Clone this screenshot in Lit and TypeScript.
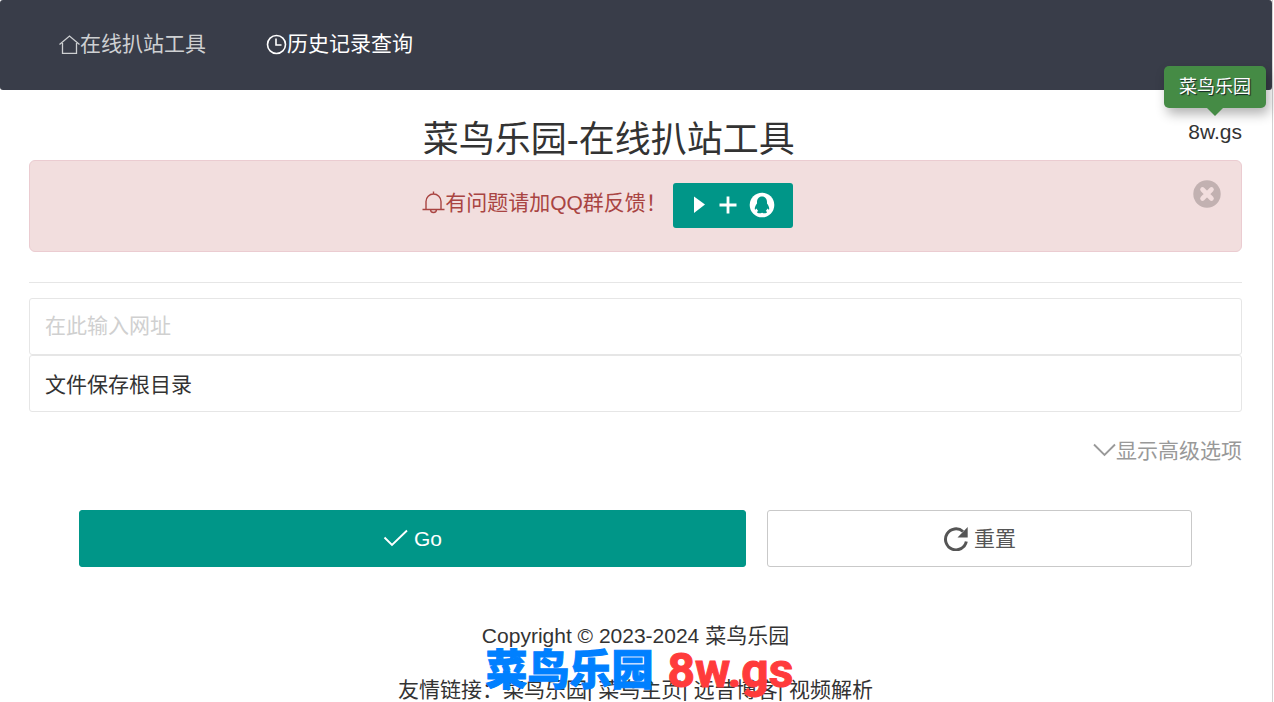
import { LitElement, html, css } from "lit";
import { customElement, state } from "lit/decorators.js";

@customElement("app-root")
export class AppRoot extends LitElement {
  @state() private alertOpen = true;

  static styles = css`
    :host {
      display: block;
      position: relative;
      box-sizing: border-box;
      min-height: 100vh;
      margin-right: 1px;
      border-right: 1px solid #d2d2d2;
      background: #fff;
      color: #333;
      font-family: "Liberation Sans", "Noto Sans CJK SC", sans-serif;
      font-size: 21px;
      line-height: 30px;
    }
    * { box-sizing: border-box; }
    a { color: inherit; text-decoration: none; }
    svg { display: block; flex: none; }
    button, input { font: inherit; margin: 0; }
    button { cursor: pointer; }
    .nav {
      display: flex;
      height: 90px;
      padding: 0 29px;
      background: #393d49;
      border-radius: 3px;
    }
    .nav a {
      display: flex;
      align-items: center;
      padding: 0 30px 2px;
      color: #fff;
    }
    .nav a.dim { color: #ced0d2; }
    .container { padding: 20px 30px 0 29px; }
    .head { display: flex; height: 50px; }
    h1 {
      flex: 1;
      margin: 0;
      font-size: 36px;
      font-weight: 400;
      line-height: 40px;
      padding-top: 10px;
      text-align: center;
    }
    .site { position: relative; padding-top: 7px; }
    .tip {
      position: absolute;
      right: -24px;
      bottom: 52px;
      padding: 6px 15px;
      border-radius: 5px;
      background: #458b45;
      color: #fff;
      font-size: 18px;
      white-space: nowrap;
      text-shadow: 1px 1px 1px #122;
      box-shadow: 3px 6px 12px rgba(0, 0, 0, 0.3);
    }
    .tip::after {
      content: "";
      position: absolute;
      top: 100%;
      left: 50%;
      margin-left: -8px;
      border: 8px solid transparent;
      border-top-color: #458b45;
      border-bottom: 0;
    }
    .alert {
      display: flex;
      align-items: flex-start;
      height: 92px;
      padding: 19px 20px;
      border: 1px solid #ebccd1;
      border-radius: 6px;
      background: #f2dede;
      color: #a94442;
    }
    .message {
      flex: 1;
      display: flex;
      justify-content: center;
      align-items: flex-start;
      gap: 6px;
      padding: 3px 28px 0 0;
    }
    .message p { display: flex; align-items: center; height: 40px; margin: 0; }
    .qq {
      display: flex;
      align-items: center;
      height: 45px;
      padding: 0 18px 2px;
      gap: 12px;
      border-radius: 3px;
      background: #009688;
    }
    .close { padding: 0; border: 0; background: none; }
    hr { margin: 30px 0 15px; border: 0; border-top: 1px solid #e6e6e6; }
    .field {
      display: block;
      width: 100%;
      height: 57px;
      padding: 0 15px 2px;
      border: 1px solid #e6e6e6;
      border-radius: 3px;
      background: #fff;
      color: #333;
      outline: 0;
    }
    .field::placeholder { color: #d0d0d0; opacity: 1; }
    .more { display: flex; justify-content: flex-end; padding: 24px 0 0; color: #999; }
    .more a { display: flex; align-items: center; }
    .actions {
      display: grid;
      grid-template-columns: 667fr 425fr;
      gap: 21px;
      padding: 44px 50px 0;
    }
    .btn {
      display: flex;
      align-items: center;
      justify-content: center;
      gap: 6px;
      height: 57px;
      border: 1px solid #c9c9c9;
      border-radius: 3px;
      background: #fff;
      color: #555;
    }
    .btn.go { border-color: #009688; background: #009688; color: #fff; }
    footer { position: relative; padding-top: 54px; text-align: center; }
    footer p { margin: 0 0 24px; white-space: nowrap; }
    footer p:last-of-type { margin: 0; height: 27px; }
    .mark {
      position: absolute;
      left: 50%;
      top: 79px;
      margin-left: -150px;
      display: flex;
      gap: 14px;
      white-space: nowrap;
      color: #0080ff;
      font-size: 42px;
      font-weight: 900;
      line-height: 50px;
      pointer-events: none;
      -webkit-text-stroke: 1px currentColor;
    }
    .mark b {
      color: #ff3b3b;
      font-family: Roboto, sans-serif;
      font-size: 48px;
      font-weight: 700;
    }
  `;

  render() {
    return html`
      <nav class="nav">
        <a class="dim" href="#">
          <svg width="21" height="21" viewBox="0 0 21 21" fill="none" stroke="currentColor" stroke-width="1.3"><path d="M.5 10.5 10.5 2l10 8.500M3.500 9v10.300h14V9" /></svg>
          <span>在线扒站工具</span>
        </a>
        <a href="#history">
          <svg width="21" height="21" viewBox="0 0 21 21" fill="none" stroke="currentColor" stroke-width="1.6"><circle cx="10.500" cy="10.500" r="9" /><path d="M10 4.500V11h5.500" /></svg>
          <span>历史记录查询</span>
        </a>
      </nav>
      <main class="container">
        <div class="head">
          <h1>菜鸟乐园-在线扒站工具</h1>
          <div class="site"><a href="#site">8w.gs</a><span class="tip">菜鸟乐园</span></div>
        </div>
        ${this.alertOpen
          ? html`<div class="alert" role="alert">
              <div class="message">
                <p>
                  <svg width="23" height="24" viewBox="0 0 23 24" fill="none" stroke="currentColor" stroke-width="1.4"><path d="M.5 18.500h22M4 18.500v-8a7.500 7.500 0 0 1 15 0v8M11.500 3V.5M8.500 18.500a3 3 0 0 0 6 0" /></svg>
                  <span>有问题请加QQ群反馈！</span>
                </p>
                <a class="qq" href="#group" aria-label="QQ">
                  <svg width="16" height="20" viewBox="0 0 16 20" fill="#fff"><path d="M3 1.500 14 9.500 3 18z" /></svg>
                  <svg width="18" height="18" viewBox="0 0 18 18" fill="none" stroke="#fff" stroke-width="2.800"><path d="M9 .5v17M.5 9h17" /></svg>
                  <svg width="26" height="26" viewBox="0 0 26 26"><circle cx="13" cy="13" r="12.300" fill="#fff" /><path fill="#009688" d="M13 4.500c-3.300 0-5 2.500-5 5.500v1.500c-1.500 2-2.400 4-2.200 5.600.1 1 .9.500 1.800-.6.300 1 .8 1.800 1.600 2.500-.9.400-1.400 1-1.100 1.600.5 1 3.600.9 4.900.1 1.300.8 4.400.9 4.900-.1.300-.6-.2-1.200-1.100-1.600.8-.7 1.300-1.500 1.600-2.500.9 1.100 1.700 1.600 1.800.6.200-1.600-.7-3.600-2.200-5.600V10c0-3-1.700-5.500-5-5.500z" /></svg>
                </a>
              </div>
              <button class="close" aria-label="关闭" @click=${() => (this.alertOpen = false)}>
                <svg width="28" height="28" viewBox="0 0 28 28"><circle cx="14" cy="14" r="13.700" fill="#c2b1b1" /><path d="m9.500 9.500 9 9m0-9-9 9" stroke="#f2dede" stroke-width="4.600" stroke-linecap="round" /></svg>
              </button>
            </div>`
          : null}
        <hr />
        <form @submit=${(e: Event) => e.preventDefault()}>
          <input class="field" type="text" aria-label="网址" placeholder="在此输入网址" />
          <input class="field" type="text" aria-label="文件保存根目录" value="文件保存根目录" />
          <div class="more">
            <a href="#advanced">
              <svg width="23" height="20" viewBox="0 0 23 20" fill="none" stroke="currentColor" stroke-width="1.900"><path d="m1 3.500 10.500 10.500L22 3.500" /></svg>
              <span>显示高级选项</span>
            </a>
          </div>
          <div class="actions">
            <button class="btn go" type="submit">
              <svg width="25" height="20" viewBox="0 0 25 20" fill="none" stroke="currentColor" stroke-width="1.900"><path d="m1.500 8.500 7.500 7.500L24 1.500" /></svg>
              <span>Go</span>
            </button>
            <button class="btn" type="reset">
              <svg width="25" height="25" viewBox="0 0 25 25"><path d="M23.300 15.500A10.500 10.500 0 1 1 20 5.500" fill="none" stroke="currentColor" stroke-width="3" /><path d="M24.700 1v10.500H14.500z" fill="currentColor" /></svg>
              <span>重置</span>
            </button>
          </div>
        </form>
        <footer>
          <p>Copyright © 2023-2024 菜鸟乐园</p>
          <p>友情链接：<a href="#a">菜鸟乐园</a>| <a href="#b">菜鸟主页</a>| <a href="#c">远昔博客</a>| <a href="#d">视频解析</a></p>
          <div class="mark"><span>菜鸟乐园</span><b>8w.gs</b></div>
        </footer>
      </main>
    `;
  }
}
